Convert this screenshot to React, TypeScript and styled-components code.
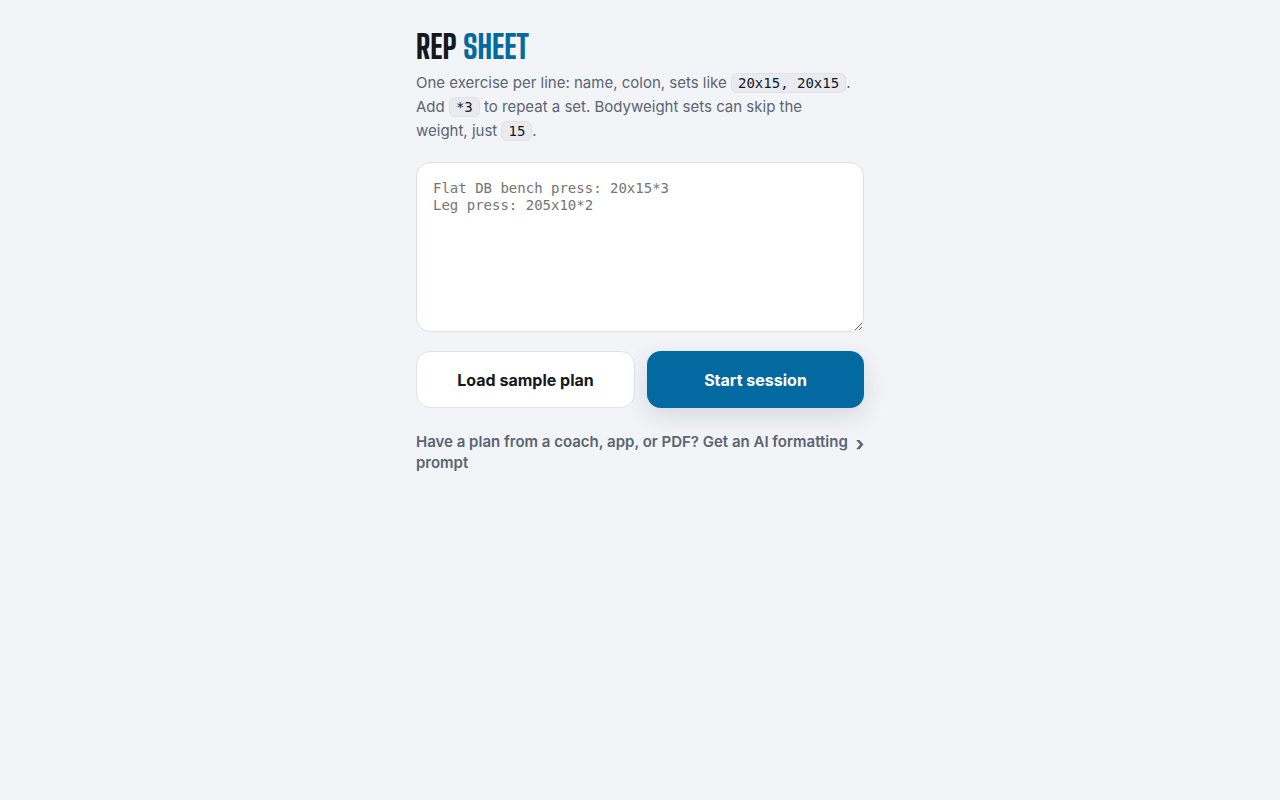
import React from "react";
import styled, { createGlobalStyle } from "styled-components";

const GlobalStyle = createGlobalStyle`
  *, *::before, *::after { box-sizing: border-box; }
  body {
    margin: 0;
    background: #f2f4f8;
    color: #14181f;
    font-family: Inter, "Liberation Sans", sans-serif;
    font-size: 16px;
    line-height: 24px;
    -webkit-font-smoothing: antialiased;
  }
`;

const mono = `"DejaVu Sans Mono", "Liberation Mono", monospace`;

const Page = styled.main`
  max-width: 480px;
  margin: 0 auto;
  padding: 24px 16px;
`;

const Title = styled.h1`
  margin: 0;
  font-family: "Big Shoulders Display", "Liberation Sans Narrow", "Roboto Condensed", sans-serif;
  font-size: 32px;
  font-weight: 800;
  line-height: 47px;
  white-space: nowrap;
`;

const Accent = styled.span`
  color: #0369a1;
`;

const Intro = styled.p`
  margin: 0 0 19px;
  padding-right: 8px;
  color: #5b6472;
  font-size: 15px;
  line-height: 24px;
`;

const Code = styled.code`
  display: inline-block;
  padding: 0 6px;
  border: 1px solid #dfe2e9;
  border-radius: 6px;
  background: #e9ebf0;
  color: #14181f;
  font-family: ${mono};
  font-size: 14px;
  line-height: 18px;
  white-space: nowrap;
`;

const PlanInput = styled.textarea`
  display: block;
  width: 100%;
  height: 170px;
  padding: 17px 16px;
  border: 1px solid #dcdfe7;
  border-radius: 14px;
  background: #fff;
  color: #14181f;
  font-family: ${mono};
  font-size: 14px;
  line-height: 17px;
  resize: vertical;

  &::placeholder { color: #757575; }
`;

const Actions = styled.div`
  display: flex;
  gap: 12px;
  margin: 19px 0 23px;
`;

const Button = styled.button<{ $primary?: boolean }>`
  flex: 1;
  min-height: 57px;
  padding: 0 16px;
  border: ${(p) => (p.$primary ? "0" : "1px solid #dfe2e9")};
  border-radius: 14px;
  background: ${(p) => (p.$primary ? "#0369a1" : "#fff")};
  box-shadow: ${(p) => (p.$primary ? "0 8px 24px rgba(20, 24, 31, 0.12)" : "none")};
  color: ${(p) => (p.$primary ? "#fff" : "#14181f")};
  font-family: inherit;
  font-size: 16px;
  font-weight: 700;
  line-height: 24px;
  cursor: pointer;
`;

const Help = styled.details`
  color: #5b6472;
  font-size: 15px;
  font-weight: 600;
  line-height: 21px;
`;

const HelpSummary = styled.summary`
  display: flex;
  justify-content: space-between;
  gap: 4px;
  list-style: none;
  cursor: pointer;
`;

const Chevron = styled.span`
  font-size: 20px;
  font-weight: 700;
  line-height: 26px;

  ${Help}[open] & { transform: rotate(90deg); }
`;

export default function App() {
  return (
    <>
      <GlobalStyle />
      <Page>
        <Title>
          REP <Accent>SHEET</Accent>
        </Title>
        <Intro>
          One exercise per line: name, colon, sets like <Code>20x15, 20x15</Code>. Add{" "}
          <Code>*3</Code> to repeat a set. Bodyweight sets can skip the weight, just{" "}
          <Code>15</Code>.
        </Intro>
        <PlanInput
          aria-label="Workout plan"
          placeholder={"Flat DB bench press: 20x15*3\nLeg press: 205x10*2"}
        />
        <Actions>
          <Button type="button">Load sample plan</Button>
          <Button type="button" $primary>
            Start session
          </Button>
        </Actions>
        <Help>
          <HelpSummary>
            <span>Have a plan from a coach, app, or PDF? Get an AI formatting prompt</span>
            <Chevron aria-hidden="true">›</Chevron>
          </HelpSummary>
        </Help>
      </Page>
    </>
  );
}
